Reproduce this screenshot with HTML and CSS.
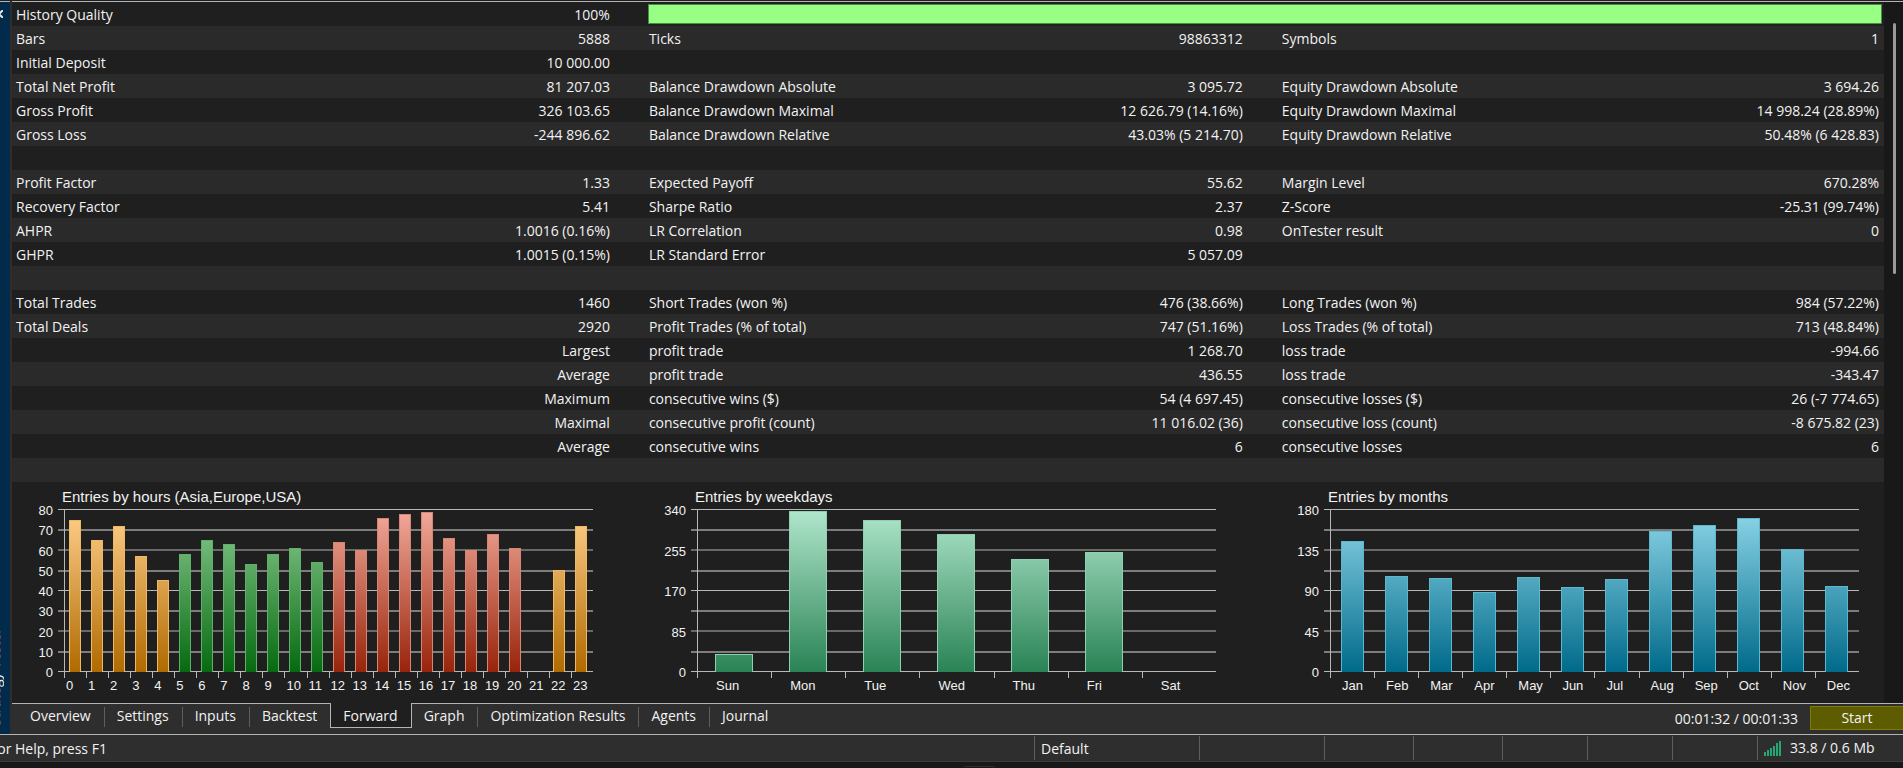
FILE: index.html
```html
<!DOCTYPE html>
<html lang="en">
<head>
  <meta charset="UTF-8">
  <meta name="viewport" content="width=device-width, initial-scale=1">
  <title>Strategy Tester</title>
  <link rel="stylesheet" href="styles.css">
</head>
<body>
  <div class="tester">
    <aside class="side">
      <button class="close" aria-label="Close">
        <svg width="8" height="8" viewBox="0 0 8 8"><path d="M0 0L8 8M8 0L0 8" stroke="#dfe6ec" stroke-width="2"/></svg>
      </button>
      <span class="side-title">Strategy Tester</span>
    </aside>

    <main class="report">
      <div class="report-body">
        <table class="stats">
          <colgroup>
            <col class="c-label"><col class="c-value"><col class="c-label"><col class="c-value"><col class="c-label"><col class="c-last">
          </colgroup>
          <tbody>
            <tr><td>History Quality</td><td>100%</td><td colspan="4" class="quality"><div class="quality-bar"></div></td></tr>
            <tr><td>Bars</td><td>5888</td><td>Ticks</td><td>98863312</td><td>Symbols</td><td>1</td></tr>
            <tr><td>Initial Deposit</td><td>10 000.00</td><td></td><td></td><td></td><td></td></tr>
            <tr><td>Total Net Profit</td><td>81 207.03</td><td>Balance Drawdown Absolute</td><td>3 095.72</td><td>Equity Drawdown Absolute</td><td>3 694.26</td></tr>
            <tr><td>Gross Profit</td><td>326 103.65</td><td>Balance Drawdown Maximal</td><td>12 626.79 (14.16%)</td><td>Equity Drawdown Maximal</td><td>14 998.24 (28.89%)</td></tr>
            <tr><td>Gross Loss</td><td>-244 896.62</td><td>Balance Drawdown Relative</td><td>43.03% (5 214.70)</td><td>Equity Drawdown Relative</td><td>50.48% (6 428.83)</td></tr>
            <tr><td colspan="6"></td></tr>
            <tr><td>Profit Factor</td><td>1.33</td><td>Expected Payoff</td><td>55.62</td><td>Margin Level</td><td>670.28%</td></tr>
            <tr><td>Recovery Factor</td><td>5.41</td><td>Sharpe Ratio</td><td>2.37</td><td>Z-Score</td><td>-25.31 (99.74%)</td></tr>
            <tr><td>AHPR</td><td>1.0016 (0.16%)</td><td>LR Correlation</td><td>0.98</td><td>OnTester result</td><td>0</td></tr>
            <tr><td>GHPR</td><td>1.0015 (0.15%)</td><td>LR Standard Error</td><td>5 057.09</td><td></td><td></td></tr>
            <tr><td colspan="6"></td></tr>
            <tr><td>Total Trades</td><td>1460</td><td>Short Trades (won %)</td><td>476 (38.66%)</td><td>Long Trades (won %)</td><td>984 (57.22%)</td></tr>
            <tr><td>Total Deals</td><td>2920</td><td>Profit Trades (% of total)</td><td>747 (51.16%)</td><td>Loss Trades (% of total)</td><td>713 (48.84%)</td></tr>
            <tr><td></td><td>Largest</td><td>profit trade</td><td>1 268.70</td><td>loss trade</td><td>-994.66</td></tr>
            <tr><td></td><td>Average</td><td>profit trade</td><td>436.55</td><td>loss trade</td><td>-343.47</td></tr>
            <tr><td></td><td>Maximum</td><td>consecutive wins ($)</td><td>54 (4 697.45)</td><td>consecutive losses ($)</td><td>26 (-7 774.65)</td></tr>
            <tr><td></td><td>Maximal</td><td>consecutive profit (count)</td><td>11 016.02 (36)</td><td>consecutive loss (count)</td><td>-8 675.82 (23)</td></tr>
            <tr><td></td><td>Average</td><td>consecutive wins</td><td>6</td><td>consecutive losses</td><td>6</td></tr>
            <tr><td colspan="6"></td></tr>
          </tbody>
        </table>

        <div class="charts">
          <section class="chart hours" id="hours"><h2>Entries by hours (Asia,Europe,USA)</h2></section>
          <section class="chart weekdays" id="weekdays"><h2>Entries by weekdays</h2></section>
          <section class="chart months" id="months"><h2>Entries by months</h2></section>
        </div>
      </div>
      <div class="scrollbar"><div class="thumb"></div></div>
    </main>

    <div class="tabbar">
      <nav class="tabs">
        <a href="#overview">Overview</a>
        <a href="#settings">Settings</a>
        <a href="#inputs">Inputs</a>
        <a href="#backtest">Backtest</a>
        <a href="#forward" class="active">Forward</a>
        <a href="#graph">Graph</a>
        <a href="#optimization">Optimization Results</a>
        <a href="#agents">Agents</a>
        <a href="#journal">Journal</a>
      </nav>
      <span class="time">00:01:32 / 00:01:33</span>
      <button class="start">Start</button>
    </div>
  </div>

  <footer class="status">
    <div class="help"><span>For Help, press F1</span></div>
    <div class="profile">Default</div>
    <div class="cell-wide"></div>
    <div class="cell"></div>
    <div class="cell"></div>
    <div class="cell-small"></div>
    <div class="cell-small"></div>
    <div class="cell-small"></div>
    <div class="traffic">
      <svg width="18" height="15" viewBox="0 0 18 15" fill="#22a873">
        <path d="M0 11h2v4H0zM3 9h2v6H3zM6 7h2v8H6zM9 5h2v10H9zM12 2h2v13h-2zM15 0h2v15h-2z"/>
      </svg>
      <span>33.8 / 0.6 Mb</span>
    </div>
  </footer>
  <div class="desktop"><div class="handle"></div></div>

  <script src="charts.js"></script>
</body>
</html>
```
FILE: styles.css
```css
* {
  box-sizing: border-box;
}
body {
  margin: 0;
  min-height: 100vh;
  display: flex;
  flex-direction: column;
  background-color: #181818;
  color: #f2f2f2;
  font-family: 'Open Sans', 'Noto Sans', sans-serif;
  font-size: 14px;
  line-height: 24px;
  overflow: hidden;
}
.tester {
  display: grid;
  grid-template-columns: 12px 1fr;
  border-top: 1px solid #1f1f1f;
  border-bottom: 1px solid #b4b4b4;
  background-color: #2e2e2e;
}

/* docked title strip */
.side {
  grid-row: 1 / 3;
  width: 10px;
  display: flex;
  flex-direction: column;
  justify-content: space-between;
  align-items: flex-start;
  overflow: hidden;
  background-color: #022a4a;
  border-top: 1px solid #b4b4b4;
}
.close {
  display: flex;
  width: 8px;
  margin: 8px 0 0 -5px;
  padding: 0;
  border: none;
  background: none;
}
.side-title {
  writing-mode: vertical-rl;
  transform: rotate(180deg);
  white-space: nowrap;
  margin: 0 0 8px -17px;
}

.report {
  display: flex;
  border-top: 1px solid #b4b4b4;
  background-color: #1f1f1f;
}
.report-body {
  flex: 1;
}
.scrollbar {
  width: 19px;
  padding: 21px 7px 0 9px;
  background-color: #181818;
}
.thumb {
  height: 251px;
  background-color: #9a9a9a;
  border-radius: 2px;
}

/* statistics */
.stats {
  width: 100%;
  table-layout: fixed;
  border-collapse: collapse;
}
.c-label {
  width: 17%;
}
.c-value {
  width: 16.81%;
}
.stats tr:nth-child(even) {
  background-color: #2a2a2a;
}
.stats td {
  height: 24px;
  padding: 2px 0 0 4px;
  line-height: 22px;
  white-space: nowrap;
}
.stats td:nth-child(even) {
  padding-right: 35px;
  text-align: right;
}
.stats td:nth-child(6) {
  padding-right: 5px;
}
.stats td.quality {
  padding: 0 2px 0 3px;
}
.quality-bar {
  height: 20px;
  border: 1px solid #4c8a45;
  background-color: #97ff83;
}

/* charts */
.charts {
  display: grid;
  grid-template-columns: 633fr 633fr 606fr;
  font-family: 'Liberation Sans', Arial, sans-serif;
}
.chart {
  display: grid;
  grid-template-columns: 46px 1fr;
  padding: 6px 0 0;
  height: 221px;
  align-content: start;
}
.chart h2 {
  grid-column: 1 / 3;
  margin: 0 0 3px 50px;
  font-size: 15px;
  font-weight: normal;
  line-height: 18px;
}
.hours {
  padding-right: 52px;
}
.weekdays {
  padding-right: 62px;
}
.months {
  padding-right: 25px;
}
.scale {
  display: flex;
  flex-direction: column;
  justify-content: space-between;
  height: 177px;
  margin: -6px 0 -8px;
  padding-right: 5px;
  text-align: right;
  font-size: 13px;
  line-height: 15px;
}
.plot {
  display: grid;
  height: 163px;
}
.lines,
.bars {
  grid-area: 1 / 1;
}
.lines {
  display: flex;
  flex-direction: column;
  justify-content: space-between;
}
.lines i {
  height: 2px;
  background-color: #7d7d7d;
}
.lines i:nth-child(4n + 3) {
  background-color: #696969;
}
.lines i:nth-child(4n + 1) {
  height: 1px;
  background-color: #b8b8b8;
}
.bars {
  display: flex;
  align-items: flex-end;
  margin-left: 6px;
  border-left: 1px solid #b8b8b8;
}
.slot {
  flex: 1 1 0;
}
.bar {
  border: 1px solid;
  border-bottom: none;
  background-position: bottom;
  background-size: 100% 162px;
}
.axis {
  grid-column: 2;
  display: flex;
  margin-left: 6px;
  font-size: 13px;
  line-height: 16px;
}
.axis span {
  flex: 1 1 0;
  width: 0;
  white-space: nowrap;
}
.axis span::before {
  content: '';
  display: block;
  width: 1px;
  height: 6px;
  background-color: #b8b8b8;
}
.axis b {
  font-weight: normal;
}
.hours .bar {
  width: 12px;
  margin-left: 4px;
}
.hours b {
  padding-left: 2px;
}
.weekdays .bar {
  width: 38px;
  margin-left: 17px;
}
.weekdays b {
  padding-left: 19px;
}
.months .bar {
  width: 23px;
  margin-left: 10px;
}
.months b {
  padding-left: 12px;
}
.asia {
  border-color: #f0b860;
  background-image: linear-gradient(#ffd08c, #b06a00);
}
.europe {
  border-color: #5fb068;
  background-image: linear-gradient(#8ccc92, #066a10);
}
.usa {
  border-color: #d88674;
  background-image: linear-gradient(#f2aa9c, #98240a);
}
.day {
  border-color: #8fd0ae;
  background-image: linear-gradient(#b0e6cc, #2a8355);
}
.month {
  border-color: #5cb8cc;
  background-image: linear-gradient(#8ed6e8, #006a8a);
}

/* tabs */
.tabbar {
  display: flex;
  height: 31px;
  border-top: 1px solid #b4b4b4;
}
.tabs {
  display: flex;
  flex: 1;
  align-items: flex-start;
  padding-left: 6px;
}
.tabs a {
  margin-top: 3px;
  padding: 0 13px 0 12px;
  height: 20px;
  border-right: 1px solid #5e5e5e;
  color: #f2f2f2;
  line-height: 18px;
  text-decoration: none;
}
.tabs a:last-child,
.tabs a:has(+ .active) {
  border-right: none;
}
.tabs a.active {
  height: 25px;
  margin-top: -1px;
  padding-top: 4px;
  border: 1px solid #b4b4b4;
  border-top: none;
  background-color: #1f1f1f;
}
.time {
  margin-right: 12px;
  line-height: 29px;
}
.start {
  width: 93px;
  height: 24px;
  margin-top: 2px;
  padding: 0 0 1px;
  border: 1px solid #7c7c00;
  border-right: none;
  background-color: #5e5c00;
  color: #f2f2f2;
  font: inherit;
  line-height: 20px;
}

/* status bar */
.status {
  display: flex;
  height: 27px;
  padding: 1px 0;
  border-bottom: 1px solid #3c3c3c;
  background-color: #2e2e2e;
  line-height: 26px;
}
.status > div {
  padding-left: 6px;
  border-left: 1px solid #5e5e5e;
}
.status > .help {
  flex: 1;
  padding: 0;
  border: none;
}
.help span {
  margin-left: -10px;
}
.status .profile {
  width: 165px;
}
.status .cell-wide {
  width: 125px;
}
.status .cell {
  width: 89px;
}
.status .cell-small {
  width: 85px;
}
.status .traffic {
  display: flex;
  align-items: center;
  gap: 8px;
  width: 146px;
}
.desktop {
  display: flex;
  justify-content: center;
  padding: 4px 0 0 56px;
}
.handle {
  width: 31px;
  height: 2px;
  border: 1px solid #2e2e2e;
  border-bottom: none;
  border-radius: 4px 4px 0 0;
}
```
FILE: charts.js
```js
const PLOT_HEIGHT = 162;

const hours = [75, 65, 72, 57, 45, 58, 65, 63, 53, 58, 61, 54, 64, 60, 76, 78, 79, 66, 60, 68, 61, 0, 50, 72];
const weekdays = [36, 337, 317, 289, 236, 251, 0];
const months = [145, 106, 104, 88, 105, 94, 103, 156, 163, 171, 136, 95];

function session(hour) {
  if (hour < 5 || hour > 21) return 'asia';
  return hour < 12 ? 'europe' : 'usa';
}

function drawChart(id, values, labels, scale, colour) {
  const max = scale[0];
  const bars = values.map((v, i) => {
    const height = Math.ceil(v / max * PLOT_HEIGHT);
    return '<div class="slot">' + (v ? `<div class="bar ${colour(i)}" style="height: ${height}px"></div>` : '') + '</div>';
  }).join('');

  document.getElementById(id).insertAdjacentHTML('beforeend',
    '<div class="scale">' + scale.map(v => `<span>${v}</span>`).join('') + '</div>' +
    '<div class="plot"><div class="lines">' + '<i></i>'.repeat(9) + '</div>' +
    '<div class="bars">' + bars + '</div></div>' +
    '<div class="axis">' + labels.map(l => `<span><b>${l}</b></span>`).join('') + '</div>');
}

drawChart('hours', hours, hours.map((v, i) => i), [80, 70, 60, 50, 40, 30, 20, 10, 0], session);
drawChart('weekdays', weekdays, ['Sun', 'Mon', 'Tue', 'Wed', 'Thu', 'Fri', 'Sat'], [340, 255, 170, 85, 0], () => 'day');
drawChart('months', months, ['Jan', 'Feb', 'Mar', 'Apr', 'May', 'Jun', 'Jul', 'Aug', 'Sep', 'Oct', 'Nov', 'Dec'], [180, 135, 90, 45, 0], () => 'month');
```
